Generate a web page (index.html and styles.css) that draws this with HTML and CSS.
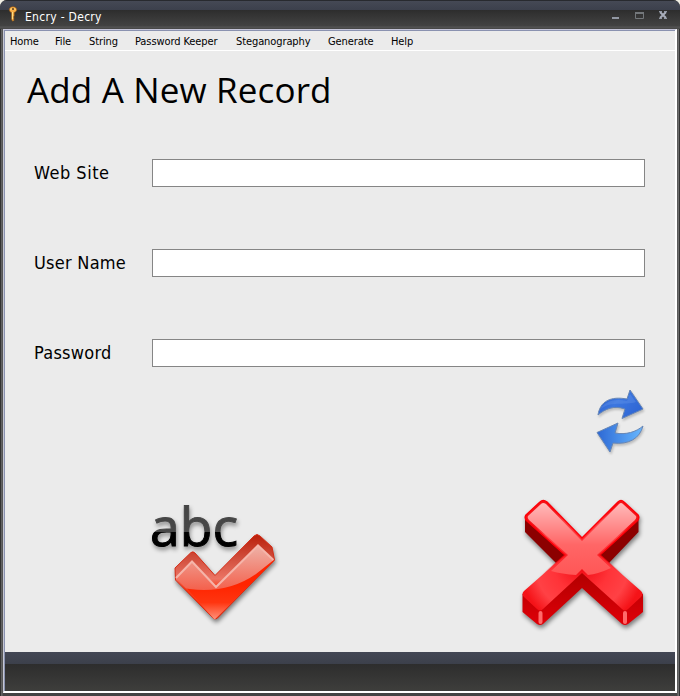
FILE: index.html
```html
<!DOCTYPE html>
<html lang="en">
<head>
<meta charset="utf-8">
<title>Encry - Decry</title>
<link rel="stylesheet" href="styles.css">
</head>
<body>
<div class="window">
  <header class="titlebar">
    <svg class="key" width="10" height="16" viewBox="0 0 10 16"><path d="M5 .7C2.600.7 1.300 2 1.300 3.700S2.300 6 3.600 6.500V14l1.400 1.300 1.200-1.200-.8-1 .8-1-.8-1 .8-1V6.500C7.600 6 8.700 5.200 8.700 3.700S7.400.7 5 .7Z" fill="#f6ad46" stroke="#96540f" stroke-width=".6"/><path d="M2.500 3.500Q5 1 7.500 3.500M4.400 6v7" fill="none" stroke="#ffe48b"/><circle cx="5" cy="3" r="1.100" fill="#68401d"/></svg>
    <h1 class="caption">Encry - Decry</h1>
    <svg class="controls" width="60" height="16" viewBox="0 0 60 16">
      <path d="M2 9h7v2H2Z" fill="#9298a4"/>
      <path d="M25.500 4.500h8v6h-8Z" fill="none" stroke="#73777b"/><path d="M25 4h9v2h-9Z" fill="#73777b"/>
      <path d="M50 4l6 6m0-6l-6 6" stroke="#a8adba" stroke-width="2"/><path d="M49 3.500h3m2 0h3M49 10.500h3m2 0h3" stroke="#9298a4"/>
    </svg>
  </header>
  <main class="client">
    <nav class="menu"><span>Home</span><span>File</span><span>String</span><span>Password Keeper</span><span>Steganography</span><span>Generate</span><span>Help</span></nav>
    <form class="content">
      <h2 class="heading">Add A New Record</h2>
      <label class="row"><span class="site">Web Site</span><input type="text"></label>
      <label class="row"><span class="user">User Name</span><input type="text"></label>
      <label class="row"><span class="pass">Password</span><input type="text"></label>
      <div class="refresh">
        <svg width="56" height="70" viewBox="592 386 56 70">
          <defs>
            <linearGradient id="b1" x2="1" y2=".5"><stop stop-color="#2456c5"/><stop offset=".5" stop-color="#3d77e0"/><stop offset="1" stop-color="#2f67d5"/></linearGradient>
            <linearGradient id="b2"><stop stop-color="#2d68d4"/><stop offset="1" stop-color="#68b8ff"/></linearGradient>
          </defs>
          <g stroke="#6685b4" stroke-width="1" stroke-linejoin="round" class="soft">
            <path d="M598 415C600 401 611 396 627 399L630 390 643 409 622 418.500 625 409C614 405 605 409 598 415Z" fill="url(#b1)"/>
            <path d="M597 432.500L618 423 615 433C626 435 636 432 643 426C640 438 629 445 613 443L610 452Z" fill="url(#b2)"/>
          </g>
          <path d="M600 410C604 402 613 398 627 401L630 394 636 402C624 406 610 400 600 410Z" fill="#7ba8f1" opacity=".25"/>
        </svg>
      </div>
      <div class="actions">
        <svg width="140" height="140" viewBox="144 494 140 140">
          <defs>
            <linearGradient id="ink" gradientUnits="userSpaceOnUse" x1="0" y1="505" x2="0" y2="550"><stop stop-color="#444"/><stop offset=".59" stop-color="#484848"/><stop offset=".6" stop-color="#000"/></linearGradient>
            <linearGradient id="edge" gradientUnits="userSpaceOnUse" x1="0" y1="534" x2="0" y2="590"><stop stop-color="#b91d08"/><stop offset=".45" stop-color="#d2503f"/><stop offset=".8" stop-color="#ec7464"/><stop offset="1" stop-color="#ff3008"/></linearGradient>
            <linearGradient id="face" gradientUnits="userSpaceOnUse" x1="0" y1="545" x2="0" y2="592"><stop stop-color="#eeb3a9"/><stop offset="1" stop-color="#f45d48"/></linearGradient>
            <linearGradient id="tip" gradientUnits="userSpaceOnUse" x1="0" y1="585" x2="0" y2="620"><stop stop-color="#ff2400"/><stop offset=".5" stop-color="#ff3510"/><stop offset="1" stop-color="#ff967f"/></linearGradient>
            <clipPath id="check"><path d="M175.500 568L176 577 214.500 619.500 274.500 560.500 259.500 546 215.500 588 191.500 562Z"/></clipPath>
          </defs>
          <text class="abc" x="150" y="546" textLength="88" lengthAdjust="spacingAndGlyphs" fill="url(#ink)" stroke="url(#ink)">abc</text>
          <path class="deep" d="M175 568L191 552.500Q193 551 195 553L215 575.500 254 536Q257 533 260 536L272 547 274.500 560 217 618.500Q214.500 620 212 617L175.500 580Z" fill="url(#edge)" stroke="#d52b15"/>
          <path d="M176 578L192 561.500 216 587 258 545.500 273.500 560.500 215 619Z" fill="url(#face)"/>
          <path clip-path="url(#check)" d="M170 585Q220 599 256 574L280 555V630H170Z" fill="url(#tip)"/>
          <path d="M176 578L192 561.500 216 587 258 545.500 273.500 560" fill="none" stroke="#f5b5aa" stroke-width="2"/>
        </svg>
        <svg width="132" height="140" viewBox="518 494 132 140">
          <defs>
            <linearGradient id="top" gradientUnits="userSpaceOnUse" x1="0" y1="500" x2="0" y2="575"><stop stop-color="#ffc0c0"/><stop offset=".6" stop-color="#ff6666"/><stop offset="1" stop-color="#ff5656"/></linearGradient>
            <radialGradient id="body" gradientUnits="userSpaceOnUse" cx="582" cy="565" r="62"><stop stop-color="#f00810"/><stop offset=".45" stop-color="#ff3338"/><stop offset=".75" stop-color="#ff4145"/><stop offset="1" stop-color="#f51318"/></radialGradient>
            <linearGradient id="rim" gradientUnits="userSpaceOnUse" x1="0" y1="550" x2="0" y2="575"><stop stop-color="#ff0008"/><stop offset="1" stop-color="#ff0008" stop-opacity="0"/></linearGradient>
            <linearGradient id="side" x2="0" y2="1"><stop stop-color="#b00000"/><stop offset="1" stop-color="#e00008"/></linearGradient>
          </defs>
          <g class="deep">
            <path d="M525 517L566 555 556 563 525 532ZM638.500 517L599 555 609 563 638.500 532Z" fill="#8c0000"/>
            <path d="M522.500 594L582 572 643 594V612L628 624Q625 626 622 624L582 588 543 624Q540 626 537 624L522.500 612Z" fill="url(#side)"/>
            <path d="M526 515L540 502Q543 499 547 502L582 538 618 502Q621 499 624 502L638 515Q640 518 637 521L600 555 641 591Q644 594 641 597L628 609Q625 612 622 609L582 573 543 609Q540 612 537 609L524 597Q521 594 524 591L565 555 527 521Q524 518 526 515Z" fill="url(#body)" stroke="url(#rim)" stroke-width="1.500"/>
          </g>
          <path d="M528 516L541 504Q543 502 546 504L582 541 619 504Q621 502 623 504L636 516Q637 518 635 520L597 555 611 568Q598 574 588 575L582 569 576 575Q562 574 551 571L568 555 529 520Q527 518 528 516Z" fill="url(#top)"/>
          <path d="M540.500 613v9M625 613v9" stroke="#ff6b6b" stroke-width="4" stroke-linecap="round"/>
        </svg>
      </div>
    </form>
    <footer class="status"></footer>
  </main>
</div>
</body>
</html>
```
FILE: styles.css
```css
* { box-sizing: border-box; }
body { margin: 0; font-family: "DejaVu Sans Condensed", "DejaVu Sans", sans-serif; font-stretch: condensed; color: #000; background: #f2f0e5; }
.window { width: 680px; height: 696px; display: flex; flex-direction: column; padding: 0 3px 3px; border-radius: 7px 7px 0 0; background: linear-gradient(90deg, #333 1px, #686868 1px, #505050 3px, #444 3px, #444 677px, #505050 677px, #777 679px, #333 679px); }
.titlebar { height: 29px; margin: 0 -3px; padding: 0 10px 0 8px; display: flex; border-radius: 7px 7px 0 0; background: linear-gradient(#282a2f 1px, #454955 1px, #3c404c 10px, #2d2d2d 10px, #434343 26px, #555 27px, #444 29px); }
.key { margin-top: 6px; }
.caption { margin: 8px 0 0 7px; font-size: 12px; line-height: 18px; font-weight: 400; letter-spacing: .3px; color: #fff; flex: 1; }
.controls { margin-top: 8px; }
.client { flex: 1; display: flex; flex-direction: column; border: solid #fff; border-width: 1px 2px 2px 1px; border-left-color: #c5c7d5; border-top-color: #c5c5d9; background: #ebebeb; box-shadow: inset 1px 1px #8a92b0; padding: 1px 0 0 1px; }
.menu { height: 20px; display: grid; grid-template-columns: 45px 34px 46px 101px 92px 63px 1fr; padding-left: 5px; border-bottom: 1px solid #fff; font-size: 11px; line-height: 22px; letter-spacing: -.1px; white-space: nowrap; }
.content { flex: 1; display: flex; flex-direction: column; }
.heading { margin: 14px 0 1px 22px; height: 49px; font: 400 35px/49px "Open Sans", sans-serif; letter-spacing: .15px; white-space: nowrap; }
.row { display: flex; height: 28px; margin: 44px 30px 18px 29px; align-items: center; font-size: 18px; }
.row span { width: 118px; height: 28px; line-height: 27px; white-space: nowrap; }
.row .site { letter-spacing: .5px; }
.row .user { letter-spacing: .25px; }
.row .pass { letter-spacing: .25px; }
.row input { flex: 1; height: 28px; border: 1px solid #858585; background: #fff; padding: 0 4px; outline: 0; }
.refresh { display: flex; justify-content: flex-end; margin-top: 1px; padding-right: 27px; height: 70px; }
.actions { display: flex; justify-content: space-between; height: 140px; margin: 38px 25px 0 139px; }
.abc { font: 53px "Open Sans", sans-serif; stroke-width: 1px; filter: drop-shadow(1px 3px 2px #0006); }
.soft { filter: drop-shadow(1px 2px 1px #0003); }
.deep { filter: drop-shadow(1px 3px 2px #0007); }
.status { height: 39px; background: linear-gradient(#434754, #3c404b 12px, #2d2d2d 12px, #3e3e3c); }
```
